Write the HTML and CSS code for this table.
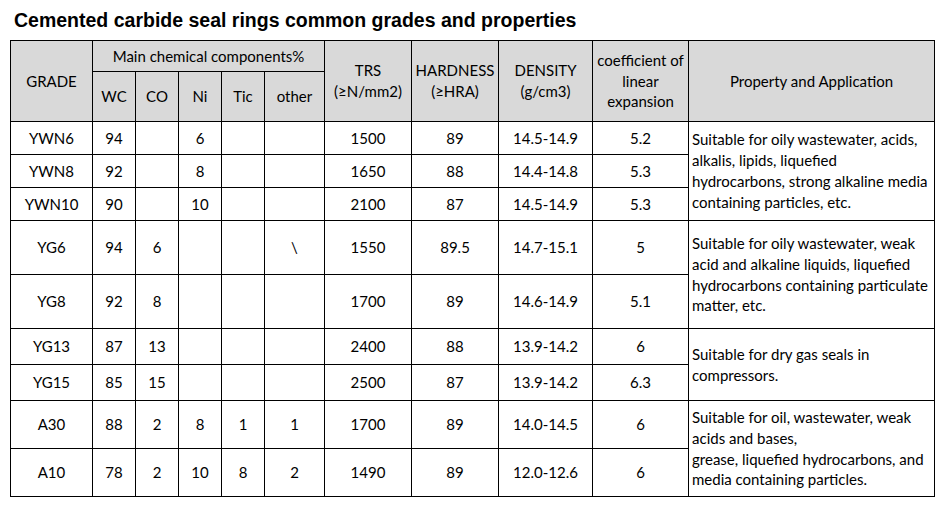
FILE: index.html
```html
<!DOCTYPE html>
<html lang="en">
<head>
<meta charset="utf-8">
<title>Cemented carbide seal rings</title>
<link rel="stylesheet" href="styles.css">
</head>
<body>
<div class="page">
  <h1 class="title">Cemented carbide seal rings common grades and properties</h1>
  <table class="grades">
    <colgroup>
      <col class="c-grade"><col class="c-el"><col class="c-el"><col class="c-el"><col class="c-el"><col class="c-other">
      <col class="c-prop"><col class="c-prop"><col class="c-dens"><col class="c-coef"><col class="c-app">
    </colgroup>
    <thead>
      <tr class="h1">
        <th rowspan="2">GRADE</th>
        <th colspan="5">Main chemical components%</th>
        <th rowspan="2">TRS<br>(≥N/mm2)</th>
        <th rowspan="2">HARDNESS<br>(≥HRA)</th>
        <th rowspan="2">DENSITY<br>(g/cm3)</th>
        <th rowspan="2">coefficient of<br>linear<br>expansion</th>
        <th rowspan="2">Property and Application</th>
      </tr>
      <tr class="h2">
        <th>WC</th><th>CO</th><th>Ni</th><th>Tic</th><th>other</th>
      </tr>
    </thead>
    <tbody>
      <tr class="r33"><td>YWN6</td><td>94</td><td></td><td>6</td><td></td><td></td><td>1500</td><td>89</td><td>14.5-14.9</td><td>5.2</td>
        <td rowspan="3" class="app">Suitable for oily wastewater, acids,<br>alkalis, lipids, liquefied<br>hydrocarbons, strong alkaline media<br>containing particles, etc.</td></tr>
      <tr class="r33"><td>YWN8</td><td>92</td><td></td><td>8</td><td></td><td></td><td>1650</td><td>88</td><td>14.4-14.8</td><td>5.3</td></tr>
      <tr class="r33"><td>YWN10</td><td>90</td><td></td><td>10</td><td></td><td></td><td>2100</td><td>87</td><td>14.5-14.9</td><td>5.3</td></tr>
      <tr class="r54"><td>YG6</td><td>94</td><td>6</td><td></td><td></td><td>\</td><td>1550</td><td>89.5</td><td>14.7-15.1</td><td>5</td>
        <td rowspan="2" class="app">Suitable for oily wastewater, weak<br>acid and alkaline liquids, liquefied<br>hydrocarbons containing particulate<br>matter, etc.</td></tr>
      <tr class="r54"><td>YG8</td><td>92</td><td>8</td><td></td><td></td><td></td><td>1700</td><td>89</td><td>14.6-14.9</td><td>5.1</td></tr>
      <tr class="r36"><td>YG13</td><td>87</td><td>13</td><td></td><td></td><td></td><td>2400</td><td>88</td><td>13.9-14.2</td><td>6</td>
        <td rowspan="2" class="app">Suitable for dry gas seals in<br>compressors.</td></tr>
      <tr class="r36"><td>YG15</td><td>85</td><td>15</td><td></td><td></td><td></td><td>2500</td><td>87</td><td>13.9-14.2</td><td>6.3</td></tr>
      <tr class="r48"><td>A30</td><td>88</td><td>2</td><td>8</td><td>1</td><td>1</td><td>1700</td><td>89</td><td>14.0-14.5</td><td>6</td>
        <td rowspan="2" class="app">Suitable for oil, wastewater, weak<br>acids and bases,<br>grease, liquefied hydrocarbons, and<br>media containing particles.</td></tr>
      <tr class="r48"><td>A10</td><td>78</td><td>2</td><td>10</td><td>8</td><td>2</td><td>1490</td><td>89</td><td>12.0-12.6</td><td>6</td></tr>
    </tbody>
  </table>
</div>
</body>
</html>
```

FILE: styles.css
```css
html, body {
  margin: 0;
  padding: 0;
  background: #ffffff;
}

.page {
  padding: 8px 0 0 10px;
}

.title {
  margin: 0 0 0 4px;
  height: 32px;
  font-family: "Liberation Sans", Arial, sans-serif;
  font-weight: bold;
  font-size: 19.5px;
  line-height: 24px;
  color: #000;
}

.grades {
  border-collapse: collapse;
  table-layout: fixed;
  width: 925px;
  font-family: Lato, "Open Sans", sans-serif;
  font-size: 15px;
  line-height: 20.8px;
  color: #000;
}

.c-grade { width: 82px; }
.c-el { width: 43px; }
.c-other { width: 60px; }
.c-prop { width: 87px; }
.c-dens { width: 94px; }
.c-coef { width: 96px; }
.c-app { width: 246px; }

.grades th,
.grades td {
  border: 1px solid #000;
  padding: 0;
  text-align: center;
  vertical-align: middle;
  font-weight: normal;
  white-space: nowrap;
  overflow: hidden;
}

.grades th {
  background: #d9d9d9;
}

.h1 { height: 31px; }
.h2 { height: 50px; }
.r33 { height: 33px; }
.r54 { height: 54px; }
.r36 { height: 36px; }
.r48 { height: 48px; }

.grades td.app {
  text-align: left;
  padding-left: 3px;
}
```
